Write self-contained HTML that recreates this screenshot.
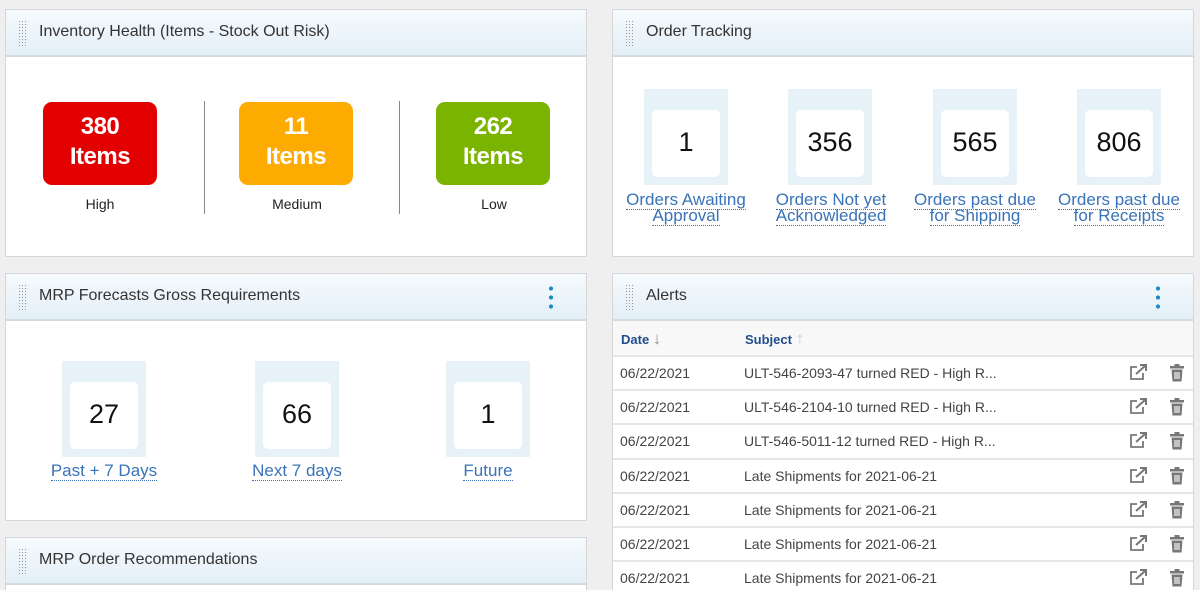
<!DOCTYPE html>
<html style="width:1200px;height:590px;overflow:hidden"><head><style>
*{box-sizing:border-box;margin:0;padding:0}
body{width:1200px;height:590px;overflow:hidden;background:#efefef;font-family:"Liberation Sans",sans-serif;position:relative}
.p{position:absolute;background:#fff;border:1px solid #d6d6d6}
.h{position:absolute;left:0;right:0;top:0;height:47px;background:linear-gradient(#f5fafd,#e3eff7);border-bottom:2px solid #d3dbe0}
.h .g{position:absolute;left:12px;top:10px;width:9px;height:26px;background-image:radial-gradient(circle,#999 0.6px,transparent 0.8px);background-size:3px 3px}
.h .t{position:absolute;left:33px;top:13px;font-size:16px;color:#333}
.h .d{position:absolute;top:10px;width:4px;height:26px;background:radial-gradient(circle,#1b88c8 2px,transparent 2.2px) 0 0/4px 9px repeat-y}
.a{position:absolute;text-align:center;color:#fff;font-weight:bold;border-radius:9px;width:114px;height:83px;top:92px;font-size:24px;line-height:30px;padding-top:10px;letter-spacing:-0.5px}
.lab{position:absolute;font-size:14px;color:#222;text-align:center;width:120px;top:186px}
.v{position:absolute;top:91px;width:1px;height:113px;background:#888}
.tile{position:absolute;width:84px;height:96px;background:#e6f1f8}
.tile div{position:absolute;left:8px;top:21px;width:68px;height:67px;background:#fff;border-radius:5px;text-align:center;line-height:64px;font-size:27px;color:#111}
.lk{position:absolute;text-align:center;color:#3a73b8;font-size:17px;line-height:16px}
.lk span{border-bottom:1px dotted #3a73b8}
.row{position:absolute;left:0;right:0;height:34px;border-top:2px solid #e6e6e6;font-size:14px;color:#444}
.row .c1{position:absolute;left:7px;top:8px}
.row .c2{position:absolute;left:131px;top:8px}
</style></head><body>

<div class="p" style="left:5px;top:9px;width:582px;height:248px">
<div class="h"><div class="g"></div><div class="t">Inventory Health (Items - Stock Out Risk)</div></div>
<div class="a" style="left:37px;background:#e20000">380<br>Items</div>
<div class="a" style="left:233px;background:#fdab00">11<br>Items</div>
<div class="a" style="left:430px;background:#7ab300">262<br>Items</div>
<div class="v" style="left:198px"></div><div class="v" style="left:393px"></div>
<div class="lab" style="left:34px">High</div>
<div class="lab" style="left:231px">Medium</div>
<div class="lab" style="left:428px">Low</div>
</div>

<div class="p" style="left:612px;top:9px;width:582px;height:248px">
<div class="h"><div class="g"></div><div class="t">Order Tracking</div></div>
<div class="tile" style="left:31px;top:79px"><div>1</div></div>
<div class="tile" style="left:175px;top:79px"><div>356</div></div>
<div class="tile" style="left:320px;top:79px"><div>565</div></div>
<div class="tile" style="left:464px;top:79px"><div>806</div></div>
<div class="lk" style="left:3px;width:140px;top:182px"><span>Orders Awaiting<br>Approval</span></div>
<div class="lk" style="left:148px;width:140px;top:182px"><span>Orders Not yet<br>Acknowledged</span></div>
<div class="lk" style="left:292px;width:140px;top:182px"><span>Orders past due<br>for Shipping</span></div>
<div class="lk" style="left:436px;width:140px;top:182px"><span>Orders past due<br>for Receipts</span></div>
</div>

<div class="p" style="left:5px;top:273px;width:582px;height:248px">
<div class="h"><div class="g"></div><div class="t">MRP Forecasts Gross Requirements</div><div class="d" style="left:543px"></div></div>
<div class="tile" style="left:56px;top:87px"><div>27</div></div>
<div class="tile" style="left:249px;top:87px"><div>66</div></div>
<div class="tile" style="left:440px;top:87px"><div>1</div></div>
<div class="lk" style="left:28px;width:140px;top:189px"><span>Past + 7 Days</span></div>
<div class="lk" style="left:221px;width:140px;top:189px"><span>Next 7 days</span></div>
<div class="lk" style="left:412px;width:140px;top:189px"><span>Future</span></div>
</div>

<div class="p" style="left:5px;top:537px;width:582px;height:70px">
<div class="h"><div class="g"></div><div class="t">MRP Order Recommendations</div></div>
</div>

<div class="p" style="left:612px;top:273px;width:582px;height:330px">
<div class="h"><div class="g"></div><div class="t">Alerts</div><div class="d" style="left:543px"></div></div>
<div style="position:absolute;left:0;right:0;top:47px;height:35px;background:#f8f8f8;font-size:13px;color:#1f4e8c;font-weight:bold">
<span style="position:absolute;left:8px;top:11px">Date <span style="color:#999;font-weight:normal;font-size:17px;line-height:13px">↓</span></span>
<span style="position:absolute;left:132px;top:11px">Subject <span style="color:#ccc;font-weight:normal;font-size:17px;line-height:13px">↑</span></span></div>
<div id="rows"></div>
</div>
<script>
var s=["ULT-546-2093-47 turned RED - High R...","ULT-546-2104-10 turned RED - High R...","ULT-546-5011-12 turned RED - High R...","Late Shipments for 2021-06-21","Late Shipments for 2021-06-21","Late Shipments for 2021-06-21","Late Shipments for 2021-06-21"];
var ic='<svg style="position:absolute;left:515px;top:7px" width="20" height="18" viewBox="0 0 20 18"><path d="M9 3H3v12h12V9" fill="none" stroke="#777" stroke-width="1.8"/><path d="M8 10L17 2M12 1h6v6" fill="none" stroke="#777" stroke-width="2"/></svg><svg style="position:absolute;left:556px;top:6px" width="16" height="20" viewBox="0 0 16 20"><rect x="1" y="3" width="14" height="2.5" fill="#777"/><rect x="5.5" y="1" width="5" height="2.5" fill="#777"/><path d="M2.5 6.5h11l-1 12h-9z" fill="#777"/><path d="M6 9v7M8 9v7M10 9v7" stroke="#fff" stroke-width="1.1"/></svg>';
var h='';for(var i=0;i<7;i++){h+='<div class="row" style="top:'+(81+i*34.2)+'px"><span class="c1">06/22/2021</span><span class="c2">'+s[i]+'</span>'+ic+'</div>';}
document.getElementById('rows').innerHTML=h;
</script>
</body></html>
